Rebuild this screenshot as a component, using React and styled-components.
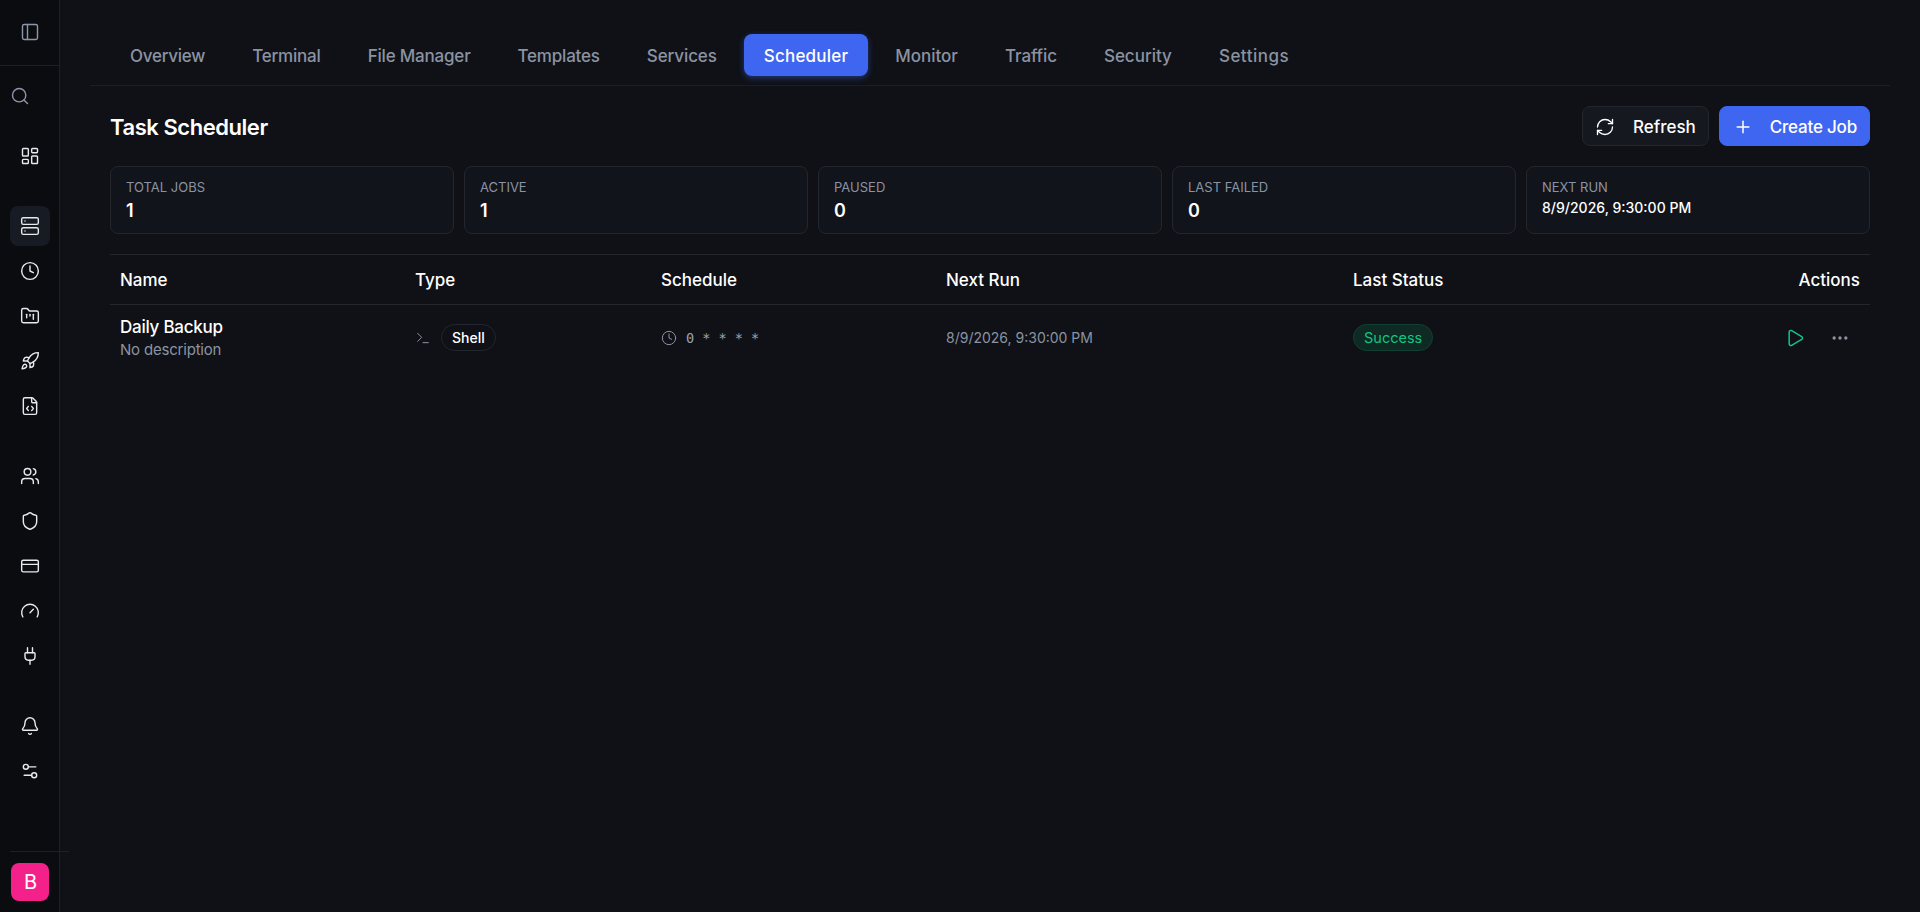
import React from "react";
import styled, { createGlobalStyle } from "styled-components";
import {
  PanelLeft, Search, LayoutDashboard, Server, Clock, FolderKanban, Rocket, FileCode,
  Users, Shield, CreditCard, Gauge, Plug, Bell, Settings2, RefreshCw, Plus, Terminal, Play, Ellipsis,
} from "lucide-react";

const Global = createGlobalStyle`
  html, body { margin: 0; padding: 0; height: 100%; background: #0f1116; }
  body { font-family: Inter, "Noto Sans", sans-serif; color: #f4f6fa; overflow: hidden; }
  * { box-sizing: border-box; }
`;

const Page = styled.div`
  display: flex;
  width: 100%;
  height: 912px;
  background: #0f1116;
`;
const Sidebar = styled.aside`
  width: 60px;
  flex: none;
  display: flex;
  flex-direction: column;
  background: #0b0c10;
  border-right: 1px solid #1d2027;
`;
const SideHead = styled.div`
  height: 66px;
  flex: none;
  display: flex;
  align-items: center;
  justify-content: center;
  padding-bottom: 1px;
  border-bottom: 1px solid #1d2027;
  color: #8b96a8;
`;
const SideGroup = styled.div`
  display: flex;
  flex-direction: column;
  gap: 5px;
  padding: 0 10px;
  margin-top: ${(p) => p.$top}px;
`;
const SideItem = styled.div`
  width: 40px;
  height: 40px;
  display: flex;
  align-items: center;
  justify-content: center;
  border-radius: 8px;
  color: ${(p) => (p.$muted ? "#8b96a8" : "#e6e9ee")};
  background: ${(p) => (p.$active ? "#171b23" : "transparent")};
  transform: ${(p) => (p.$shift ? "translateX(-10px)" : "none")};
`;
const SideFoot = styled.div`
  margin: auto -10px 0 10px;
  height: 61px;
  border-top: 1px solid #1d2027;
  display: flex;
  align-items: flex-start;
  padding: 11px 0 0 1px;
  position: relative;
`;
const Avatar = styled.div`
  width: 38px;
  height: 38px;
  border-radius: 8px;
  background: #f4218b;
  color: #fff;
  font-size: 20px;
  padding-left: 1px;
  display: flex;
  align-items: center;
  justify-content: center;
`;
const Main = styled.main`
  flex: 1;
  min-width: 0;
  padding: 0 30px;
  display: flex;
  flex-direction: column;
`;
const TabBar = styled.nav`
  display: flex;
  gap: 7px;
  padding: 34px 20px 9px;
  border-bottom: 1px solid #1b1e25;
`;
const Tab = styled.div`
  height: 42px;
  padding: 1px 20px 0;
  display: flex;
  align-items: center;
  border-radius: 8px;
  font-size: 17px;
  font-weight: 500;
  letter-spacing: ${(p) => p.$ls}px;
  color: ${(p) => (p.$active ? "#fff" : "#8b93a3")};
  background: ${(p) => (p.$active ? "#3f66f0" : "transparent")};
  box-shadow: ${(p) => (p.$active ? "0 2px 6px rgba(63,102,240,.45)" : "none")};
`;
const Content = styled.section`
  padding: 20px 20px 0;
  display: flex;
  flex-direction: column;
  gap: 20px;
`;
const TitleRow = styled.header`
  display: flex;
  align-items: center;
  justify-content: space-between;
`;
const Title = styled.h1`
  margin: 0;
  padding-top: 1px;
  font-size: 22px;
  font-weight: 600;
  letter-spacing: -0.45px;
  color: #fff;
`;
const Actions = styled.div`
  display: flex;
  gap: 10px;
`;
const Button = styled.button`
  height: 40px;
  display: flex;
  align-items: center;
  gap: ${(p) => (p.$primary ? "17px" : "18px")};
  padding: 1px 12px 0 ${(p) => (p.$primary ? "13px" : "12px")};
  border-radius: 8px;
  border: 1px solid ${(p) => (p.$primary ? "#3f66f0" : "#22262e")};
  background: ${(p) => (p.$primary ? "#3f66f0" : "#15181f")};
  color: #fff;
  font: 500 17px Inter, sans-serif;
  letter-spacing: ${(p) => (p.$primary ? "-0.2px" : "0")};
`;
const Stats = styled.div`
  display: grid;
  grid-template-columns: repeat(5, 1fr);
  gap: 10px;
`;
const StatCard = styled.div`
  height: 68px;
  padding: 12px 15px 0;
  background: #11141b;
  border: 1px solid #22262e;
  border-radius: 8px;
`;
const StatLabel = styled.div`
  font-size: 13px;
  line-height: 16px;
  color: #8b93a3;
`;
const StatValue = styled.div`
  margin-top: ${(p) => (p.$small ? "3px" : "5px")};
  font-size: ${(p) => (p.$small ? "14px" : "18px")};
  line-height: ${(p) => (p.$small ? "20px" : "22px")};
  font-weight: ${(p) => (p.$small ? 500 : 600)};
  color: #fff;
`;
const Table = styled.div`
  border-top: 1px solid #22262e;
`;
const Row = styled.div`
  display: grid;
  grid-template-columns: 295px 246px 285px 407px 1fr;
  align-items: center;
  height: ${(p) => p.$h}px;
  border-bottom: ${(p) => (p.$head ? "1px solid #22262e" : "none")};
`;
const HeadCell = styled.div`
  padding: 0 10px;
  font-size: 17px;
  font-weight: 500;
  color: #fff;
`;
const SplitRow = styled.div`
  display: flex;
  justify-content: space-between;
`;
const Cell = styled.div`
  padding: 0 10px;
  display: flex;
  align-items: center;
`;
const NameCol = styled.div`
  display: flex;
  flex-direction: column;
  gap: 2px;
`;
const JobName = styled.div`
  font-size: 17px;
  line-height: 22px;
  font-weight: 500;
  letter-spacing: -0.25px;
  color: #fff;
`;
const JobDesc = styled.div`
  font-size: 15px;
  line-height: 20px;
  letter-spacing: -0.2px;
  color: #8b93a3;
`;
const TypeIcon = styled.span`
  display: flex;
  color: #8b93a3;
  margin-right: 10px;
`;
const ShellPill = styled.span`
  height: 27px;
  padding: 0 10px;
  display: flex;
  align-items: center;
  border: 1px solid #22262e;
  border-radius: 14px;
  font-size: 14px;
  font-weight: 500;
  color: #fff;
`;
const ClockIcon = styled.span`
  display: flex;
  color: #8b93a3;
  margin-right: 9px;
`;
const Cron = styled.span`
  font-family: "DejaVu Sans Mono", monospace;
  font-size: 13.5px;
  color: #9aa3b2;
`;
const NextRun = styled.span`
  font-size: 14px;
  color: #8b93a3;
`;
const LastWrap = styled.div`
  flex: 1;
  display: flex;
  align-items: center;
  justify-content: space-between;
`;
const StatusPill = styled.span`
  height: 27px;
  padding: 0 10px;
  display: flex;
  align-items: center;
  background: #0e2a23;
  border: 1px solid #114034;
  border-radius: 14px;
  font-size: 14.5px;
  color: #12c486;
`;
const RowActions = styled.div`
  display: flex;
  align-items: center;
  gap: 25px;
  padding-right: 10px;
`;
const PlayIcon = styled.span`
  display: flex;
  color: #12c486;
`;
const MoreIcon = styled.span`
  display: flex;
  color: #8b93a3;
`;

const tabs = [
  { name: "Overview", ls: -0.25 },
  { name: "Terminal", ls: -0.2 },
  { name: "File Manager", ls: -0.2 },
  { name: "Templates", ls: -0.2 },
  { name: "Services", ls: -0.1 },
  { name: "Scheduler", ls: 0.2 },
  { name: "Monitor", ls: 0 },
  { name: "Traffic", ls: -0.1 },
  { name: "Security", ls: 0 },
  { name: "Settings", ls: 0.5 },
];
const stats = [
  { label: "TOTAL JOBS", value: "1" },
  { label: "ACTIVE", value: "1" },
  { label: "PAUSED", value: "0" },
  { label: "LAST FAILED", value: "0" },
  { label: "NEXT RUN", value: "8/9/2026, 9:30:00 PM", small: true },
];
const S = 20, W = 1.7;

export default function App() {
  const ic = (I) => <I size={S} strokeWidth={W} />;
  return (
    <Page>
      <Global />
      <Sidebar>
        <SideHead>{ic(PanelLeft)}</SideHead>
        <SideGroup $top={10}><SideItem $muted $shift>{ic(Search)}</SideItem></SideGroup>
        <SideGroup $top={20}><SideItem>{ic(LayoutDashboard)}</SideItem></SideGroup>
        <SideGroup $top={30}>
          <SideItem $active>{ic(Server)}</SideItem>
          <SideItem>{ic(Clock)}</SideItem>
          <SideItem>{ic(FolderKanban)}</SideItem>
          <SideItem>{ic(Rocket)}</SideItem>
          <SideItem>{ic(FileCode)}</SideItem>
        </SideGroup>
        <SideGroup $top={30}>
          <SideItem>{ic(Users)}</SideItem>
          <SideItem>{ic(Shield)}</SideItem>
          <SideItem>{ic(CreditCard)}</SideItem>
          <SideItem>{ic(Gauge)}</SideItem>
          <SideItem>{ic(Plug)}</SideItem>
        </SideGroup>
        <SideGroup $top={30}>
          <SideItem>{ic(Bell)}</SideItem>
          <SideItem>{ic(Settings2)}</SideItem>
        </SideGroup>
        <SideFoot><Avatar>B</Avatar></SideFoot>
      </Sidebar>
      <Main>
        <TabBar>
          {tabs.map((t) => <Tab key={t.name} $ls={t.ls} $active={t.name === "Scheduler"}>{t.name}</Tab>)}
        </TabBar>
        <Content>
          <TitleRow>
            <Title>Task Scheduler</Title>
            <Actions>
              <Button><RefreshCw size={20} strokeWidth={1.6} />Refresh</Button>
              <Button $primary><Plus size={20} strokeWidth={1.8} />Create Job</Button>
            </Actions>
          </TitleRow>
          <Stats>
            {stats.map((s) => (
              <StatCard key={s.label}>
                <StatLabel>{s.label}</StatLabel>
                <StatValue $small={s.small}>{s.value}</StatValue>
              </StatCard>
            ))}
          </Stats>
          <Table>
            <Row $head $h={50}>
              <HeadCell>Name</HeadCell>
              <HeadCell>Type</HeadCell>
              <HeadCell>Schedule</HeadCell>
              <HeadCell>Next Run</HeadCell>
              <HeadCell>
                <SplitRow>
                  <span>Last Status</span>
                  <span>Actions</span>
                </SplitRow>
              </HeadCell>
            </Row>
            <Row $h={65}>
              <Cell>
                <NameCol>
                  <JobName>Daily Backup</JobName>
                  <JobDesc>No description</JobDesc>
                </NameCol>
              </Cell>
              <Cell>
                <TypeIcon><Terminal size={16} strokeWidth={1.5} /></TypeIcon>
                <ShellPill>Shell</ShellPill>
              </Cell>
              <Cell>
                <ClockIcon><Clock size={16} strokeWidth={1.5} /></ClockIcon>
                <Cron>0 * * * *</Cron>
              </Cell>
              <Cell><NextRun>8/9/2026, 9:30:00 PM</NextRun></Cell>
              <Cell>
                <LastWrap>
                  <StatusPill>Success</StatusPill>
                  <RowActions>
                    <PlayIcon><Play size={20} strokeWidth={1.8} /></PlayIcon>
                    <MoreIcon><Ellipsis size={20} strokeWidth={2} /></MoreIcon>
                  </RowActions>
                </LastWrap>
              </Cell>
            </Row>
          </Table>
        </Content>
      </Main>
    </Page>
  );
}
